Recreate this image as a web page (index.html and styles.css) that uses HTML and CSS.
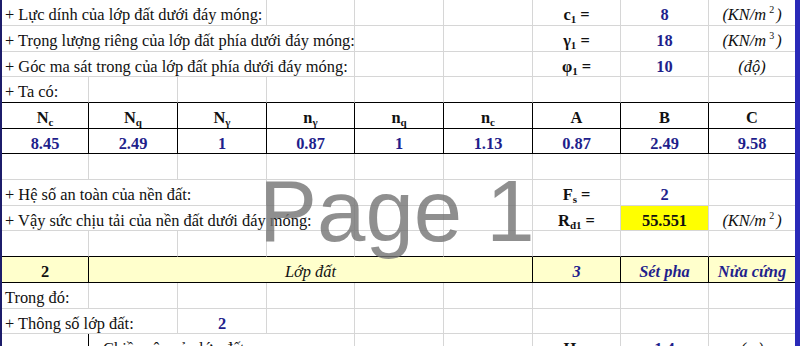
FILE: index.html
```html
<!DOCTYPE html>
<html lang="vi">
<head>
<meta charset="utf-8">
<title>Sheet</title>
<link rel="stylesheet" href="styles.css">
</head>
<body>
<div class="sheet">
  <!-- row 1 -->
  <div class="c l s3">+ Lực dính của lớp đất dưới đáy móng:</div>
  <div class="c"></div>
  <div class="c"></div>
  <div class="c"></div>
  <div class="c m b">c<sub>1</sub> =</div>
  <div class="c m v">8</div>
  <div class="c m i e">(KN/m<sup>2</sup>)</div>
  <!-- row 2 -->
  <div class="c l s4">+ Trọng lượng riêng của lớp đất phía dưới đáy móng:</div>
  <div class="c"></div>
  <div class="c"></div>
  <div class="c m b">γ<sub>1</sub> =</div>
  <div class="c m v">18</div>
  <div class="c m i e">(KN/m<sup>3</sup>)</div>
  <!-- row 3 -->
  <div class="c l s4">+ Góc ma sát trong của lớp đất phía dưới đáy móng:</div>
  <div class="c"></div>
  <div class="c"></div>
  <div class="c m b">φ<sub>1</sub> =</div>
  <div class="c m v">10</div>
  <div class="c m i e">(độ)</div>
  <!-- row 4 -->
  <div class="c l kb">+ Ta có:</div>
  <div class="c kb"></div>
  <div class="c kb"></div>
  <div class="c kb"></div>
  <div class="c kb"></div>
  <div class="c kb"></div>
  <div class="c kb"></div>
  <div class="c kb"></div>
  <div class="c kb e"></div>
  <!-- row 5 header -->
  <div class="c m b k">N<sub>c</sub></div>
  <div class="c m b k">N<sub>q</sub></div>
  <div class="c m b k">N<sub>γ</sub></div>
  <div class="c m b k">n<sub>γ</sub></div>
  <div class="c m b k">n<sub>q</sub></div>
  <div class="c m b k">n<sub>c</sub></div>
  <div class="c m b k">A</div>
  <div class="c m b k">B</div>
  <div class="c m b k e">C</div>
  <!-- row 6 values -->
  <div class="c m v k">8.45</div>
  <div class="c m v k">2.49</div>
  <div class="c m v k">1</div>
  <div class="c m v k">0.87</div>
  <div class="c m v k">1</div>
  <div class="c m v k">1.13</div>
  <div class="c m v k">0.87</div>
  <div class="c m v k">2.49</div>
  <div class="c m v k e">9.58</div>
  <!-- row 7 -->
  <div class="c"></div>
  <div class="c"></div>
  <div class="c"></div>
  <div class="c"></div>
  <div class="c"></div>
  <div class="c"></div>
  <div class="c"></div>
  <div class="c"></div>
  <div class="c e"></div>
  <!-- row 8 -->
  <div class="c l s3">+ Hệ số an toàn của nền đất:</div>
  <div class="c"></div>
  <div class="c"></div>
  <div class="c"></div>
  <div class="c m b">F<sub>s</sub> =</div>
  <div class="c m v">2</div>
  <div class="c e"></div>
  <!-- row 9 -->
  <div class="c l s4">+ Vậy sức chịu tải của nền đất dưới đáy móng:</div>
  <div class="c"></div>
  <div class="c"></div>
  <div class="c m b">R<sub>đ1</sub> =</div>
  <div class="c m b yy">55.551</div>
  <div class="c m i e">(KN/m<sup>2</sup>)</div>
  <!-- row 10 -->
  <div class="c kb"></div>
  <div class="c kb"></div>
  <div class="c kb"></div>
  <div class="c kb"></div>
  <div class="c kb"></div>
  <div class="c kb"></div>
  <div class="c kb"></div>
  <div class="c kb"></div>
  <div class="c kb e"></div>
  <!-- row 11 -->
  <div class="c m b yl k">2</div>
  <div class="c m i yl k s5">Lớp đất</div>
  <div class="c m b i vc yl k">3</div>
  <div class="c m b i vc yl k">Sét pha</div>
  <div class="c m b i vc yl k e">Nửa cứng</div>
  <!-- row 12 -->
  <div class="c l">Trong đó:</div>
  <div class="c"></div>
  <div class="c"></div>
  <div class="c"></div>
  <div class="c"></div>
  <div class="c"></div>
  <div class="c"></div>
  <div class="c"></div>
  <div class="c e"></div>
  <!-- row 13 -->
  <div class="c l s2">+ Thông số lớp đất:</div>
  <div class="c m v">2</div>
  <div class="c"></div>
  <div class="c"></div>
  <div class="c"></div>
  <div class="c"></div>
  <div class="c"></div>
  <div class="c e"></div>
  <!-- row 14 -->
  <div class="c kr"></div>
  <div class="c l s3 ind">Chiều sâu của lớp đất:</div>
  <div class="c"></div>
  <div class="c"></div>
  <div class="c m b">H =</div>
  <div class="c m v">1.4</div>
  <div class="c m i e">(m)</div>

  <div class="wm">Page 1</div>
</div>
</body>
</html>
```

FILE: styles.css
```css
html, body {
  margin: 0;
  padding: 0;
  background: #ffffff;
}

.sheet {
  position: relative;
  width: 793px;
  height: 346px;
  overflow: hidden;
  display: grid;
  grid-template-columns: 87px 89px 89px 88px 89px 89px 88px 88px 86px;
  grid-template-rows: 26px 26px 25px 26px 26px 25px 26px 26px 25px 26px 26px 26px 25px 26px;
  border-left: 2px solid #1c1c6a;
  border-right: 5px solid #2a2ab8;
  font-family: "Liberation Serif", "Times New Roman", serif;
  font-size: 16.4px;
  color: #111111;
}

.c {
  box-sizing: border-box;
  display: block;
  padding: 6px 3px 0 3px;
  line-height: 18px;
  white-space: nowrap;
  overflow: visible;
  border-right: 1px solid #d6d6d6;
  border-bottom: 1px solid #d6d6d6;
  min-width: 0;
}

.e { border-right: none; }

.l { text-align: left; }
.m { text-align: center; }
.b { font-weight: bold; }
.i { font-style: italic; }
.v { font-weight: bold; color: #1f1f8c; }
.vc { color: #1f1f8c; }

.s2 { grid-column: span 2; }
.s3 { grid-column: span 3; }
.s4 { grid-column: span 4; }
.s5 { grid-column: span 5; }

.ind { padding-left: 14px; }

.k { border-right-color: #000000; border-bottom-color: #000000; }
.k.e { border-right: none; }
.kb { border-bottom-color: #000000; }
.kr { border-right-color: #000000; }

.yl { background: #ffffcc; }
.yy { background: #ffff00; color: #111111; }

sub {
  font-size: 11px;
  vertical-align: -3px;
  line-height: 0;
}

sup {
  font-size: 10px;
  vertical-align: 7px;
  line-height: 0;
  margin: 0 2px 0 3px;
  font-style: normal;
}

.wm {
  position: absolute;
  left: 257px;
  top: 167px;
  font-family: "Liberation Sans", Arial, sans-serif;
  font-size: 87px;
  line-height: 1;
  color: rgba(115, 115, 115, 0.8);
  pointer-events: none;
  white-space: nowrap;
}
```
